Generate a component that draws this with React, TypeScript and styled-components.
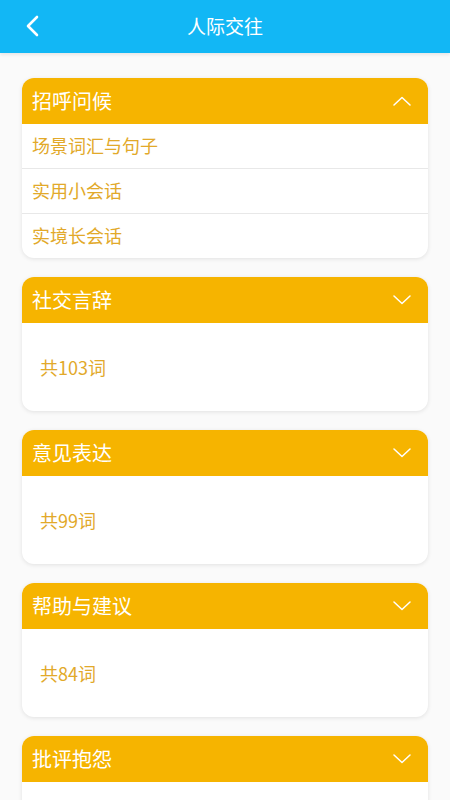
import styled, { createGlobalStyle } from "styled-components";

const GlobalStyle = createGlobalStyle`
  html, body {
    margin: 0;
    padding: 0;
    background: #fafafa;
    font-family: "Noto Sans CJK SC", "Noto Sans", sans-serif;
  }
`;

const Page = styled.div`
  width: 450px;
  height: 800px;
  background: #fafafa;
  overflow: hidden;
`;

const TopBar = styled.header`
  height: 53px;
  background: #12b7f5;
  display: flex;
  align-items: center;
  justify-content: center;
  position: relative;
  box-shadow: 0 2px 3px rgba(0, 0, 0, 0.08);
`;

const BackButton = styled.div`
  position: absolute;
  left: 22px;
  top: 14px;
  width: 20px;
  height: 24px;
  display: flex;
  align-items: center;
  justify-content: center;
`;

const TopTitle = styled.h1`
  margin: 0 0 2px;
  color: #ffffff;
  font-size: 19px;
  font-weight: 400;
  line-height: 1;
`;

const List = styled.div`
  display: flex;
  flex-direction: column;
  gap: 19px;
  padding: 25px 22px 0;
`;

const Card = styled.section`
  background: #ffffff;
  border-radius: 12px;
  overflow: hidden;
  box-shadow: 0 1px 4px rgba(0, 0, 0, 0.1);
`;

const CardHead = styled.div`
  height: 46px;
  box-sizing: border-box;
  background: #f6b400;
  display: flex;
  align-items: center;
  justify-content: space-between;
  padding: 0 17px 1px 10px;
`;

const CardTitle = styled.span`
  color: #ffffff;
  font-size: 20px;
  line-height: 1;
`;

const Row = styled.div`
  height: 42px;
  display: flex;
  align-items: center;
  padding: 0 10px 2px;
  color: #e2a92a;
  font-size: 18px;
  & + & {
    border-top: 1px solid #e8e8e8;
  }
`;

const Summary = styled.div`
  height: 88px;
  display: flex;
  align-items: center;
  padding: 0 18px;
  color: #e2a92a;
  font-size: 18px;
`;

const Chevron = ({ up }: { up?: boolean }) => (
  <svg width="18" height="10" viewBox="0 0 18 10" fill="none">
    <path
      d={up ? "M1 9 L9 1.5 L17 9" : "M1 1 L9 8.5 L17 1"}
      stroke="#ffffff"
      strokeWidth="1.5"
      strokeLinecap="round"
      strokeLinejoin="round"
    />
  </svg>
);

type Section = { title: string; items?: string[]; count?: number };

const sections: Section[] = [
  { title: "招呼问候", items: ["场景词汇与句子", "实用小会话", "实境长会话"] },
  { title: "社交言辞", count: 103 },
  { title: "意见表达", count: 99 },
  { title: "帮助与建议", count: 84 },
  { title: "批评抱怨", count: 90 },
];

export default function App() {
  return (
    <Page>
      <GlobalStyle />
      <TopBar>
        <BackButton>
          <svg width="14" height="22" viewBox="0 0 14 22" fill="none">
            <path
              d="M12 2 L3 11 L12 20"
              stroke="#ffffff"
              strokeWidth="2.6"
              strokeLinecap="round"
              strokeLinejoin="round"
            />
          </svg>
        </BackButton>
        <TopTitle>人际交往</TopTitle>
      </TopBar>
      <List>
        {sections.map((s) => (
          <Card key={s.title}>
            <CardHead>
              <CardTitle>{s.title}</CardTitle>
              <Chevron up={!!s.items} />
            </CardHead>
            {s.items ? (
              s.items.map((it) => <Row key={it}>{it}</Row>)
            ) : (
              <Summary>共{s.count}词</Summary>
            )}
          </Card>
        ))}
      </List>
    </Page>
  );
}
